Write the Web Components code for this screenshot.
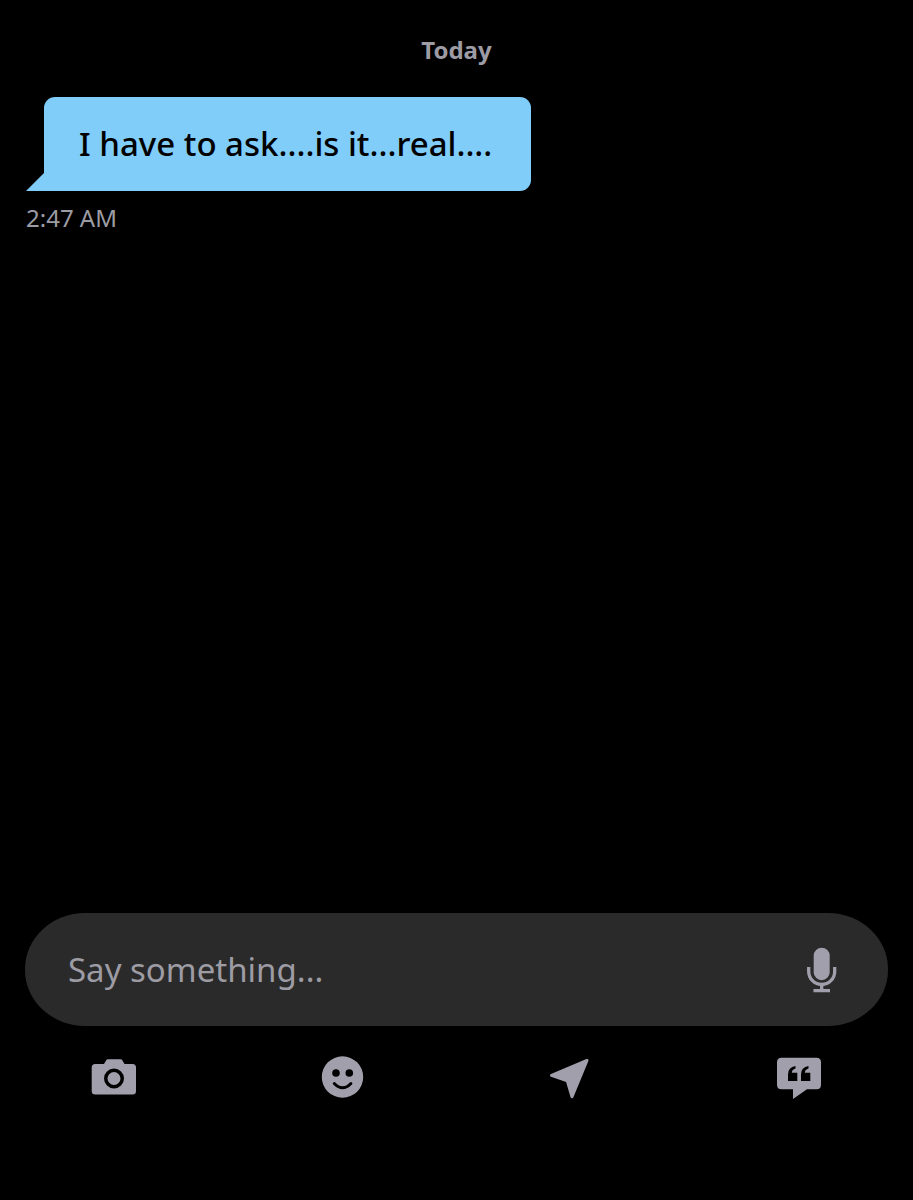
<!DOCTYPE html>
<html lang="en">
<head>
  <meta charset="utf-8">
  <meta name="viewport" content="width=device-width, initial-scale=1">
  <title>Chat</title>
  <style>
    body {
      margin: 0;
      background: #000;
      color: #9d9ca4;
      font-family: "Noto Sans", sans-serif;
      --muted: #a19fab;
      --bubble: #80cdf9;
      --field: #2a2a2a;
    }
  </style>
</head>
<body>
  <chat-screen>
    <chat-day>Today</chat-day>
    <chat-message time="2:47 AM">I have to ask....is it...real....</chat-message>
    <chat-composer slot="footer" placeholder="Say something..."></chat-composer>
    <chat-toolbar slot="footer">
      <chat-tool icon="camera" label="Send a photo"></chat-tool>
      <chat-tool icon="smile" label="Emoji"></chat-tool>
      <chat-tool icon="location" label="Share location"></chat-tool>
      <chat-tool icon="quote" label="Quick replies"></chat-tool>
    </chat-toolbar>
  </chat-screen>

  <script>
    const icons = {
      camera: `
        <path fill-rule="evenodd" d="M21 9.300h12.500q1.200 0 1.800 1l2.200 3.700H45.500q3.500 0 3.500 3.500v23.500q0 3.500-3.500 3.500H8.200q-3.500 0-3.500-3.500V17.500q0-3.500 3.500-3.500H17l2.200-3.700q.6-1 1.800-1zM27 18.500a10 10 0 1 0 0 20a10 10 0 1 0 0-20zM27 22a6.500 6.500 0 1 1 0 13a6.500 6.500 0 1 1 0-13z"/>`,
      smile: `
        <path fill-rule="evenodd" d="M27.500 6.300a20.700 20.700 0 1 0 0 41.400a20.700 20.700 0 1 0 0-41.400zM21 19.200a3.800 3.800 0 1 1 0 7.600a3.800 3.800 0 1 1 0-7.600zM34.300 19.200a3.800 3.800 0 1 1 0 7.600a3.800 3.800 0 1 1 0-7.600z"/>
        <path d="M19.300 33.500q8.300 8.600 16.600 0" fill="none" stroke="#000" stroke-width="3" stroke-linecap="round"/>`,
      location: `
        <path d="M43 10.500L7.500 25.300L23.300 30.800L28 46.700z" stroke="currentColor" stroke-width="3" stroke-linejoin="round"/>`,
      quote: `
        <path d="M9.500 7.700h35q4.500 0 4.500 4.500v22.600q0 4.500-4.500 4.500H35L21 49v-9.700H9.500q-4.500 0-4.500-4.500V12.200q0-4.500 4.500-4.500z"/>
        <path fill="#000" d="M16 31v-6.500q0-7.500 7.500-8.500v2.500q-3.500 1-3.700 4.300h5.500V31zM29 31v-6.500q0-7.500 7.500-8.500v2.500q-3.500 1-3.700 4.300h5.500V31z"/>`,
      mic: `
        <rect x="18.700" y="4.700" width="16" height="32.500" rx="8"/>
        <path d="M13.700 24v4.500a13 13 0 0 0 26 0V24M26.700 41.500v6M18.500 47.700h16.500" fill="none" stroke="currentColor" stroke-width="3.300"/>`
    };

    class ChatIcon extends HTMLElement {
      constructor() {
        super();
        this.attachShadow({ mode: 'open' });
      }

      connectedCallback() {
        const name = this.getAttribute('name');

        this.shadowRoot.innerHTML = `
          <style>
            :host {
              display: block;
              width: 54px;
              height: 54px;
              color: var(--muted);
            }
            svg {
              display: block;
            }
          </style>
          <svg viewBox="0 0 54 54" width="54" height="54" fill="currentColor" aria-hidden="true">${icons[name]}</svg>
        `;
      }
    }

    class ChatScreen extends HTMLElement {
      constructor() {
        super();
        this.attachShadow({ mode: 'open' });
      }

      connectedCallback() {
        this.shadowRoot.innerHTML = `
          <style>
            :host {
              display: flex;
              flex-direction: column;
              min-height: 100vh;
              box-sizing: border-box;
              padding-bottom: 72px;
            }
            main {
              flex: 1;
              padding: 34px 26px;
            }
          </style>
          <main><slot></slot></main>
          <footer><slot name="footer"></slot></footer>
        `;
      }
    }

    class ChatDay extends HTMLElement {
      constructor() {
        super();
        this.attachShadow({ mode: 'open' });
      }

      connectedCallback() {
        this.shadowRoot.innerHTML = `
          <style>
            :host {
              display: block;
              margin-bottom: 31px;
              font-size: 24px;
              font-weight: 700;
              line-height: 32px;
              text-align: center;
            }
          </style>
          <slot></slot>
        `;
      }
    }

    class ChatMessage extends HTMLElement {
      constructor() {
        super();
        this.attachShadow({ mode: 'open' });
      }

      connectedCallback() {
        const time = this.getAttribute('time');

        this.shadowRoot.innerHTML = `
          <style>
            :host {
              display: block;
            }
            .row {
              display: flex;
              align-items: flex-end;
            }
            .tail {
              flex: none;
              width: 18px;
              height: 18px;
              background: var(--bubble);
              clip-path: polygon(100% 0, 100% 100%, 0 100%);
            }
            .bubble {
              padding: 25px 39px 25px 35px;
              border-radius: 11px 11px 11px 0;
              background: var(--bubble);
              color: #000;
              font-size: 33px;
              font-weight: 500;
              line-height: 44px;
            }
            .time {
              display: block;
              margin-top: 11px;
              font-size: 24px;
              line-height: 32px;
            }
          </style>
          <div class="row">
            <span class="tail"></span>
            <div class="bubble"><slot></slot></div>
          </div>
          <time class="time">${time}</time>
        `;
      }
    }

    class ChatComposer extends HTMLElement {
      constructor() {
        super();
        this.attachShadow({ mode: 'open' });
      }

      connectedCallback() {
        const placeholder = this.getAttribute('placeholder');

        this.shadowRoot.innerHTML = `
          <style>
            :host {
              display: block;
              margin: 0 25px;
            }
            .field {
              display: flex;
              align-items: center;
              height: 113px;
              box-sizing: border-box;
              padding: 0 39px 0 43px;
              border-radius: 60px / 56px;
              background: var(--field);
            }
            input {
              flex: 1;
              min-width: 0;
              padding: 0;
              border: 0;
              outline: 0;
              background: none;
              color: #fff;
              font: inherit;
              font-size: 33px;
              line-height: 44px;
            }
            input::placeholder {
              color: #9d9ca4;
              opacity: 1;
            }
            button {
              padding: 0;
              border: 0;
              background: none;
              cursor: pointer;
            }
          </style>
          <div class="field">
            <input type="text" placeholder="${placeholder}" aria-label="Message">
            <button type="button" aria-label="Record voice"><chat-icon name="mic"></chat-icon></button>
          </div>
        `;
      }
    }

    class ChatToolbar extends HTMLElement {
      constructor() {
        super();
        this.attachShadow({ mode: 'open' });
      }

      connectedCallback() {
        this.shadowRoot.innerHTML = `
          <style>
            :host {
              display: grid;
              grid-template-columns: repeat(4, 1fr);
            }
          </style>
          <slot></slot>
        `;
      }
    }

    class ChatTool extends HTMLElement {
      constructor() {
        super();
        this.attachShadow({ mode: 'open' });
      }

      connectedCallback() {
        const icon = this.getAttribute('icon');
        const label = this.getAttribute('label');

        this.shadowRoot.innerHTML = `
          <style>
            :host {
              display: flex;
              justify-content: center;
            }
            button {
              padding: 24px;
              border: 0;
              background: none;
              cursor: pointer;
            }
          </style>
          <button type="button" aria-label="${label}"><chat-icon name="${icon}"></chat-icon></button>
        `;
      }
    }

    customElements.define('chat-icon', ChatIcon);
    customElements.define('chat-screen', ChatScreen);
    customElements.define('chat-day', ChatDay);
    customElements.define('chat-message', ChatMessage);
    customElements.define('chat-composer', ChatComposer);
    customElements.define('chat-toolbar', ChatToolbar);
    customElements.define('chat-tool', ChatTool);
  </script>
</body>
</html>
